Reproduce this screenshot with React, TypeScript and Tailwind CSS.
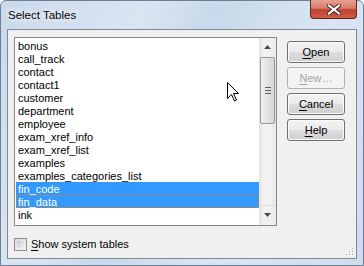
import React from "react";

const tables = [
    "bonus",
    "call_track",
    "contact",
    "contact1",
    "customer",
    "department",
    "employee",
    "exam_xref_info",
    "exam_xref_list",
    "examples",
    "examples_categories_list",
    "fin_code",
    "fin_data",
    "ink",
];

const selected = ["fin_code", "fin_data"];
const focused = "fin_data";

function Underlined({ first, rest }: { first: string; rest: string }) {
    return (
        <span>
            <span className="underline underline-offset-[2px]">{first}</span>
            {rest}
        </span>
    );
}

function DialogButton({ first, rest, disabled }: { first: string; rest: string; disabled?: boolean }) {
    if (disabled) {
        return (
            <div className="flex h-[22px] w-[58px] items-center justify-center rounded-[3px] border border-[#adb2b5] bg-[#f4f4f4] text-[#a3a3a3]">
                <Underlined first={first} rest={rest} />
            </div>
        );
    }
    return (
        <div className="flex h-[22px] w-[58px] items-center justify-center rounded-[3px] border border-[#707070] bg-[linear-gradient(#f2f2f2_0%,#ebebeb_50%,#dddddd_50%,#cfcfcf_100%)] text-black shadow-[inset_0_0_0_1px_#fbfbfb]">
            <Underlined first={first} rest={rest} />
        </div>
    );
}

function ScrollArrow({ down }: { down?: boolean }) {
    return (
        <div className="flex h-[17px] w-[17px] items-center justify-center">
            <svg width="7" height="4" viewBox="0 0 7 4">
                {down ? (
                    <path d="M0 0 H7 L3.5 4 Z" fill="#4d4d4d" />
                ) : (
                    <path d="M0 4 H7 L3.5 0 Z" fill="#4d4d4d" />
                )}
            </svg>
        </div>
    );
}

function Scrollbar() {
    return (
        <div className="flex w-[17px] flex-col bg-[linear-gradient(90deg,#e3e3e3,#f2f2f2_30%,#f0f0f0_70%,#e8e8e8)]">
            <ScrollArrow />
            <div className="mx-[1px] mt-[2px] flex h-[67px] items-center justify-center rounded-[2px] border border-[#979797] bg-[linear-gradient(90deg,#f2f2f2,#e2e2e2_50%,#d6d6d6)]">
                <div className="flex flex-col gap-[2px]">
                    <div className="h-[1px] w-[6px] bg-[#5f5f5f]" />
                    <div className="h-[1px] w-[6px] bg-[#5f5f5f]" />
                    <div className="h-[1px] w-[6px] bg-[#5f5f5f]" />
                </div>
            </div>
            <div className="flex-1" />
            <div className="mb-[2px] border-t border-[#dcdcdc]">
                <ScrollArrow down />
            </div>
        </div>
    );
}

function Cursor() {
    return (
        <svg className="absolute left-[227px] top-[82px]" width="13" height="20" viewBox="0 0 13 20">
            <path
                d="M0.5 0.5 L0.5 16.5 L4.5 12.5 L7.5 19 L9.5 18 L6.5 11.5 L11.5 11.5 Z"
                fill="white"
                stroke="black"
                strokeWidth="1"
            />
        </svg>
    );
}

function CloseButton() {
    return (
        <div className="absolute right-[7px] top-0 flex h-[19px] w-[47px] items-center justify-center rounded-b-[4px] border border-t-0 border-[#5e2a24] bg-[linear-gradient(#e8a192_0%,#d77b6a_45%,#c2402f_55%,#cf5d45_100%)]">
            <svg width="14" height="11" viewBox="0 0 14 11">
                <path d="M2 1.5 L12 9.5 M12 1.5 L2 9.5" stroke="#3b1c1c" strokeWidth="4" strokeLinecap="square" />
                <path d="M2 1.5 L12 9.5 M12 1.5 L2 9.5" stroke="white" strokeWidth="2.2" strokeLinecap="square" />
            </svg>
        </div>
    );
}

function ResizeGrip() {
    const dots = [
        [8, 0],
        [8, 3],
        [5, 3],
        [8, 6],
        [5, 6],
        [2, 6],
    ];
    return (
        <svg className="absolute bottom-[2px] right-[2px]" width="10" height="8" viewBox="0 0 10 8">
            {dots.map(([x, y]) => (
                <g key={`${x}-${y}`}>
                    <rect x={x + 1} y={y + 1} width="1" height="1" fill="white" />
                    <rect x={x} y={y} width="1" height="1" fill="#a0a0a0" />
                </g>
            ))}
        </svg>
    );
}

export default function App() {
    return (
        <div className="relative h-[266px] w-[364px] overflow-hidden font-['Liberation_Sans',Arial,sans-serif] text-[11px] leading-[13px]">
            <div className="flex h-full w-full flex-col rounded-t-[6px] border border-[#6d7f95] bg-[linear-gradient(115deg,#cad9eb_0%,#dae5f2_30%,#c9d9eb_45%,#d9e5f2_70%,#cedcee_100%)] px-[6px] pb-[6px]">
                <div className="flex h-[28px] items-center pl-[1px]">
                    <span className="text-[11.5px] text-black [text-shadow:0_0_6px_white,0_0_10px_white]">
                        Select Tables
                    </span>
                </div>
                <div className="relative flex flex-1 gap-[10px] border border-[#7d8a99] bg-[#f0f0f0] pl-[6px] pr-[10px] pt-[7px]">
                    <div className="flex flex-col">
                        <div className="flex h-[189px] w-[263px] border border-[#828790] bg-white">
                            <div className="flex-1 pl-[1px] pt-[1px]">
                                {tables.map((t) => {
                                    const isSel = selected.includes(t);
                                    const isFocus = t === focused;
                                    return (
                                        <div
                                            key={t}
                                            className={
                                                isSel
                                                    ? isFocus
                                                        ? "h-[13px] border border-dotted border-[#e07b10] bg-[#3399ff] pl-[1px] leading-[13px] text-white"
                                                        : "h-[13px] bg-[#3399ff] pl-[2px] leading-[15px] text-white"
                                                    : "h-[13px] pl-[2px] leading-[15px] text-black"
                                            }
                                        >
                                            {t}
                                        </div>
                                    );
                                })}
                            </div>
                            <Scrollbar />
                        </div>
                        <div className="mt-[12px] flex items-center gap-[4px]">
                            <div className="h-[13px] w-[13px] border border-[#8f8f8f] bg-[linear-gradient(135deg,#dcdcdc,#f4f4f4)] p-[2px]">
                                <div className="h-full w-full bg-[linear-gradient(135deg,#cbcbcb,#f0f0f0)]" />
                            </div>
                            <span className="text-black">
                                <Underlined first="S" rest="how system tables" />
                            </span>
                        </div>
                    </div>
                    <div className="flex flex-col gap-[4px] pt-[4px]">
                        <DialogButton first="O" rest="pen" />
                        <DialogButton first="N" rest="ew…" disabled />
                        <DialogButton first="C" rest="ancel" />
                        <DialogButton first="H" rest="elp" />
                    </div>
                    <ResizeGrip />
                </div>
            </div>
            <CloseButton />
            <Cursor />
        </div>
    );
}
